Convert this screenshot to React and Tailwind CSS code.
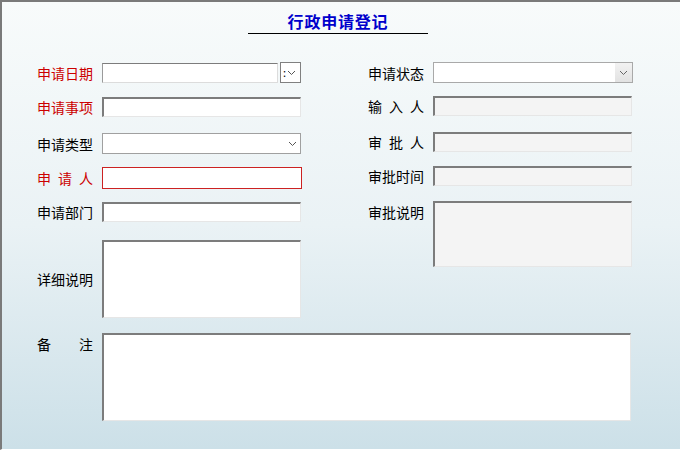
import React from 'react';

const font = { fontFamily: '"Noto Sans CJK SC", "Liberation Sans", sans-serif' };

function Chevron({ color = '#555' }) {
  return (
    <svg width="9" height="6" viewBox="0 0 9 6">
      <polyline points="1,1 4.5,4.5 8,1" fill="none" stroke={color} strokeWidth="1" />
    </svg>
  );
}

function Label({ children, red, spread }) {
  const color = red ? 'text-[#cc0000]' : 'text-black';
  if (spread) {
    return (
      <div className={`w-[56px] flex justify-between text-[14px] leading-[20px] ${color}`}>
        {children.split('').map((c, i) => (
          <span key={i}>{c}</span>
        ))}
      </div>
    );
  }
  return <div className={`w-[56px] text-[14px] leading-[20px] whitespace-nowrap ${color}`}>{children}</div>;
}

const sunken =
  'border-t-2 border-l-2 border-b border-r border-t-[#7c7c7c] border-l-[#7c7c7c] border-b-[#e6e6e6] border-r-[#e6e6e6]';

function Sunken({ w, h = 20, disabled }) {
  return (
    <div
      className={`${sunken} ${disabled ? 'bg-[#f4f4f4]' : 'bg-white'}`}
      style={{ width: w, height: h }}
    />
  );
}

function Row({ label, red, spread, children, className = '' }) {
  return (
    <div className={`flex items-center ${className}`}>
      <div className="w-[65px] shrink-0">
        <Label red={red} spread={spread}>{label}</Label>
      </div>
      {children}
    </div>
  );
}

export default function App() {
  return (
    <div
      className="w-[680px] h-[450px] overflow-hidden border-t-2 border-l-2 border-b border-t-[#7a7a7a] border-l-[#7a7a7a] border-b-white bg-gradient-to-b from-[#f8fbfb] via-[#eaf2f5] to-[#cce0e8] relative"
      style={font}
    >
      {/* title */}
      <div className="flex flex-col items-center pt-[8px] pr-[6px]">
        <div className="text-[16px] font-bold text-[#0000cc] leading-[22px] tracking-[0.8px]">行政申请登记</div>
        <div className="mt-[1px] w-[180px] h-[1px] bg-black" />
      </div>

      <div className="flex pl-[35px] mt-[28px]">
        {/* left column */}
        <div className="w-[266px] flex flex-col">
          <Row label="申请日期" red>
            <div className="flex items-center gap-[2px]">
              <div className="w-[176px] h-[20px] bg-white border border-[#9a9a9a] border-t-[#7c7c7c] border-b-[#dcdcdc] border-r-[#dcdcdc]" />
              <div className="w-[21px] h-[21px] bg-white border border-[#808080] flex items-center justify-between pl-[2px] pr-[4px]">
                <span className="text-[11px] leading-none text-black">:</span>
                <Chevron />
              </div>
            </div>
          </Row>
          <Row label="申请事项" red className="mt-[14px]">
            <Sunken w={199} />
          </Row>
          <Row label="申请类型" className="mt-[16px]">
            <div className="w-[199px] h-[21px] bg-white border border-[#a0a0a0] flex items-center justify-end pr-[3px]">
              <Chevron />
            </div>
          </Row>
          <Row label="申请人" red spread className="mt-[13px]">
            <div className="w-[200px] h-[22px] bg-white border border-[#cc2222]" />
          </Row>
          <Row label="申请部门" className="mt-[13px]">
            <Sunken w={199} />
          </Row>
          <Row label="详细说明" className="mt-[18px]">
            <Sunken w={199} h={78} />
          </Row>
        </div>

        {/* right column */}
        <div className="ml-[65px] flex flex-col">
          <Row label="申请状态">
            <div className="w-[200px] h-[21px] bg-white border border-[#a9a9a9] flex">
              <div className="flex-1" />
              <div className="w-[17px] h-full bg-gradient-to-b from-[#f2f2f2] to-[#e2e2e2] flex items-center justify-center">
                <Chevron color="#666" />
              </div>
            </div>
          </Row>
          <Row label="输入人" spread className="mt-[13px]">
            <Sunken w={199} disabled />
          </Row>
          <Row label="审批人" spread className="mt-[16px]">
            <Sunken w={199} disabled />
          </Row>
          <Row label="审批时间" className="mt-[14px]">
            <Sunken w={199} disabled />
          </Row>
          <div className="flex mt-[15px]">
            <div className="w-[65px] shrink-0 pt-[1px]">
              <Label>审批说明</Label>
            </div>
            <Sunken w={199} h={66} disabled />
          </div>
        </div>
      </div>

      {/* remarks */}
      <div className="flex pl-[35px] mt-[15px]">
        <div className="w-[65px] shrink-0 pt-[1px]">
          <div className="w-[56px] flex justify-between text-[14px] leading-[20px] text-black">
            <span>备</span>
            <span>注</span>
          </div>
        </div>
        <Sunken w={529} h={88} />
      </div>
    </div>
  );
}
